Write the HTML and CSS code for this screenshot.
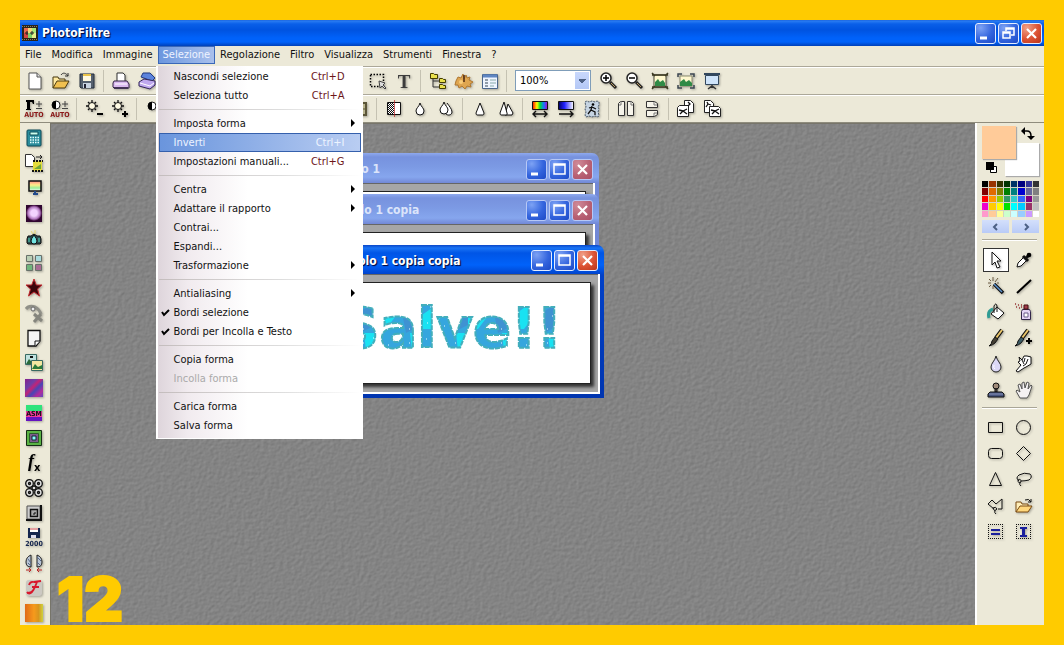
FILE: index.html
```html
<!DOCTYPE html>
<html lang="it">
<head>
<meta charset="utf-8">
<title>PhotoFiltre</title>
<link rel="stylesheet" href="styles.css">
</head>
<body>
<div class="app">
  <header class="titlebar">
    <svg class="logo" viewBox="0 0 16 16" aria-hidden="true"><rect width="16" height="16" fill="#2b2418"/><path d="M0 1.500h16M0 14.500h16" stroke="#8a8062" stroke-dasharray="1 1"/><path fill="#e8694e" d="M2 3h4v5H2z"/><path fill="#f4d77c" d="M6 3h4v5H6z"/><path fill="#a9e77a" d="M10 3h4v5h-4z"/><path fill="#d4443e" d="M2 8h4v5H2z"/><path fill="#7fd06a" d="M6 8h4v5H6z"/><path fill="#e6f08a" d="M10 8h4v5h-4z"/><path d="M3 8h3M8 8h4M5 6v4M10 6v4" stroke="#222"/></svg>
    <h1>PhotoFiltre</h1>
    <div class="winbtns">
      <button class="wb" aria-label="Riduci"><svg viewBox="0 0 21 21"><path d="M5 15h7" stroke="#fff" stroke-width="3"/></svg></button>
      <button class="wb" aria-label="Ripristina"><svg viewBox="0 0 21 21"><path d="M8 8V5h8v7h-3M8 6h8" fill="none" stroke="#fff" stroke-width="1.500"/><path d="M5 9h7v6H5zM5 10h7" fill="none" stroke="#fff" stroke-width="1.500"/></svg></button>
      <button class="wb close" aria-label="Chiudi"><svg viewBox="0 0 21 21"><path d="M6 6l9 9M15 6l-9 9" stroke="#fff" stroke-width="2.200"/></svg></button>
    </div>
  </header>

  <nav class="menubar">
    <button>File</button><button>Modifica</button><button>Immagine</button>
    <div class="open-item">
      <button class="active">Selezione</button>
      <div class="menu" role="menu">
        <button role="menuitem"><span>Nascondi selezione</span><kbd>Ctrl+D</kbd></button>
        <button role="menuitem"><span>Seleziona tutto</span><kbd>Ctrl+A</kbd></button>
        <hr>
        <button role="menuitem" class="sub"><span>Imposta forma</span></button>
        <button role="menuitem" class="hot"><span>Inverti</span><kbd>Ctrl+I</kbd></button>
        <button role="menuitem"><span>Impostazioni manuali...</span><kbd>Ctrl+G</kbd></button>
        <hr>
        <button role="menuitem" class="sub"><span>Centra</span></button>
        <button role="menuitem" class="sub"><span>Adattare il rapporto</span></button>
        <button role="menuitem"><span>Contrai...</span></button>
        <button role="menuitem"><span>Espandi...</span></button>
        <button role="menuitem" class="sub"><span>Trasformazione</span></button>
        <hr>
        <button role="menuitem" class="sub"><span>Antialiasing</span></button>
        <button role="menuitemcheckbox" aria-checked="true"><svg class="tick" viewBox="0 0 9 9"><path d="M1 4l2 3 5-5" fill="none" stroke="#000" stroke-width="2"/></svg><span>Bordi selezione</span></button>
        <button role="menuitemcheckbox" aria-checked="true"><svg class="tick" viewBox="0 0 9 9"><path d="M1 4l2 3 5-5" fill="none" stroke="#000" stroke-width="2"/></svg><span>Bordi per Incolla e Testo</span></button>
        <hr>
        <button role="menuitem"><span>Copia forma</span></button>
        <button role="menuitem" disabled><span>Incolla forma</span></button>
        <hr>
        <button role="menuitem"><span>Carica forma</span></button>
        <button role="menuitem"><span>Salva forma</span></button>
      </div>
    </div>
    <button>Regolazione</button><button>Filtro</button><button>Visualizza</button><button>Strumenti</button><button>Finestra</button><button>?</button>
  </nav>

  <div class="toolbar first">
    <button aria-label="Nuovo"><svg viewBox="0 0 20 20"><path d="M4 2h8l4 4v12H4z" fill="#fff" stroke="#555"/><path d="M12 2v4h4" fill="#ddd" stroke="#555"/></svg></button>
    <button aria-label="Apri"><svg viewBox="0 0 20 20"><path d="M2 17V6h5l1 2h6v3" fill="#ffe9a0" stroke="#4a3a10"/><path d="M2 17l4-7h12l-4 7z" fill="#f0c050" stroke="#4a3a10"/><path d="M10 4c2-3 5-2 7 1M17 2v3h-3" fill="none" stroke="#333"/></svg></button>
    <button aria-label="Salva"><svg viewBox="0 0 20 20"><path d="M3 3h14v14H4l-1-1z" fill="#55606e" stroke="#222c3c"/><path d="M6 3h8v7H6z" fill="#fff9e0"/><path d="M6 4h8" stroke="#eac348" stroke-width="2"/><path d="M6 12h8v5H6z" fill="#c9d4e2"/><path d="M7 13h2v4H7z" fill="#223"/></svg></button>
    <i class="sep"></i>
    <button aria-label="Stampa"><svg viewBox="0 0 20 20"><path d="M6 10V2h6l2 2v6" fill="#fff" stroke="#333"/><path d="M3 10h13l2 3v4H3l-1-1v-4z" fill="#d9b8ee" stroke="#332244"/><path d="M4 13h12" stroke="#fff"/><path d="M3 17h14" stroke="#433355" stroke-width="2"/></svg></button>
    <button aria-label="Acquisisci"><svg viewBox="0 0 20 20"><path d="M6 2l7 0 5 5-3 3L4 6z" fill="#5c83dc" stroke="#223a80"/><path d="M2 11l5-3 11 2v4l-5 4-11-3z" fill="#bfa8ee" stroke="#33265a"/><path d="M3 12l10 3 4-3" fill="none" stroke="#fff"/></svg></button>
    <i class="under-a"></i>
    <button aria-label="Selezione"><svg viewBox="0 0 20 20"><path d="M2.500 3.500h13v12h-13z" fill="none" stroke="#000" stroke-width="1.500" stroke-dasharray="1.500 1.500"/><path d="M11 10l6 2-2 2 3 3-1 1-3-3-2 2z" fill="#ddd" stroke="#444"/></svg></button>
    <button aria-label="Testo"><svg viewBox="0 0 20 20"><text x="10" y="17" class="glyph-t">T</text></svg></button>
    <i class="sep"></i>
    <button aria-label="Esplora"><svg viewBox="0 0 20 20"><path d="M5 7v9h6M5 10h6" fill="none" stroke="#333"/><path d="M2.500 2.500h3l1 1h3v4h-7zM11.500 7.500h3l1 1h2v3h-6zM11.500 13.500h3l1 1h2v3h-6z" fill="#e9e04c" stroke="#443c00"/></svg></button>
    <button aria-label="Automatismi"><svg viewBox="0 0 20 20"><path d="M2 10l2-4 3 1 2-4 1 5 2-4 1 3 3-1-1 3 4 2-3 2 1 3-4-1-2 3-3-3-3 2-1-3-3 0z" fill="#dfa650" stroke="#b07830"/><path d="M10 4v7" stroke="#4e2910" stroke-width="1.500"/><circle cx="7" cy="11" r="2" fill="#f8cd7a"/></svg></button>
    <button aria-label="Preferenze"><svg viewBox="0 0 20 20"><path d="M2.500 3.500h15v14h-15z" fill="#eef4ff" stroke="#4b668c"/><path d="M3 5h14" stroke="#5f86c2" stroke-width="3"/><path d="M5 9h3M5 12h3M5 15h3" stroke="#345"/><path d="M10 9h6M10 12h6M10 15h4" stroke="#8aa"/></svg></button>
    <i class="sep"></i>
    <select aria-label="Zoom"><option>100%</option></select>
    <button aria-label="Ingrandisci"><svg viewBox="0 0 20 20"><circle cx="8" cy="7" r="5" fill="#fff" stroke="#222" stroke-width="1.500"/><path d="M5 7h6M8 4v6" stroke="#000" stroke-width="1.500"/><path d="M12 11l6 6" stroke="#222" stroke-width="3"/><path d="M13 12l4 4" stroke="#b99b62"/></svg></button>
    <button aria-label="Riduci zoom"><svg viewBox="0 0 20 20"><circle cx="8" cy="7" r="5" fill="#fff" stroke="#222" stroke-width="1.500"/><path d="M5 7h6" stroke="#000" stroke-width="1.500"/><path d="M12 11l6 6" stroke="#222" stroke-width="3"/><path d="M13 12l4 4" stroke="#b99b62"/></svg></button>
    <button aria-label="Dimensioni reali"><svg viewBox="0 0 20 20"><path d="M4 4h12v12H4z" fill="#fff8cf" stroke="#4b4b38"/><path d="M5 15v-4l3-3 2 3 3-2 2 3v3z" fill="#2f8a46"/><path d="M2 2l3 3M18 2l-3 3M2 18l3-3M18 18l-3-3M2 4h16M2 16h16" stroke="#3c3a22" stroke-width="1.500"/></svg></button>
    <button aria-label="Adatta"><svg viewBox="0 0 20 20"><path d="M4 5h12v10H4z" fill="#fff8cf" stroke="#8b8b70"/><path d="M4 15v-4l4-3 2 3 3-2 3 3v3z" fill="#2f8a46"/><path d="M2 6V3h4M14 3h4v3M2 14v3h4M14 17h4v-3" fill="none" stroke="#3b4650" stroke-width="1.500"/></svg></button>
    <button aria-label="Schermo intero"><svg viewBox="0 0 20 20"><path d="M2 3h16" stroke="#33485e" stroke-width="2"/><path d="M3.500 4.500h13v9h-13z" fill="#cfe4fa" stroke="#33485e"/><path d="M10 14v3M6 18l4-3 4 3" fill="none" stroke="#333" stroke-width="1.500"/></svg></button>
  </div>

  <div class="toolbar second">
    <button aria-label="Gamma automatico"><svg viewBox="0 0 20 20"><path d="M2 1h8v4H9L8 3H6v7h1v1H2v-1h1V3H2z"/><path d="M12 5h6M15 2v6M12 9.500h6" stroke="#444"/><text x="10" y="18" class="auto">AUTO</text></svg></button>
    <button aria-label="Contrasto automatico"><svg viewBox="0 0 20 20"><circle cx="6" cy="6" r="4" fill="#fff" stroke="#222"/><path d="M6 2a4 4 0 0 0 0 8z"/><path d="M12 5h6M15 2v6M12 9.500h6" stroke="#444"/><text x="10" y="18" class="auto">AUTO</text></svg></button>
    <i class="sep"></i>
    <button aria-label="Meno luminosità"><svg viewBox="0 0 20 20"><path d="M8 1v12M2 7h12M4 3l8 8M12 3l-8 8" stroke="#111" stroke-width="1.300"/><circle cx="8" cy="7" r="3.500" fill="#fffbe4" stroke="#111"/><path d="M13 15h6" stroke="#000" stroke-width="2"/></svg></button>
    <button aria-label="Più luminosità"><svg viewBox="0 0 20 20"><path d="M8 1v12M2 7h12M4 3l8 8M12 3l-8 8" stroke="#111" stroke-width="1.300"/><circle cx="8" cy="7" r="3.500" fill="#fffbe4" stroke="#111"/><path d="M12 15h6M15 12v6" stroke="#000" stroke-width="2"/></svg></button>
    <i class="sep"></i>
    <button aria-label="Meno contrasto"><svg viewBox="0 0 20 20"><circle cx="8" cy="7" r="4" fill="#fff" stroke="#222"/><path d="M8 3a4 4 0 0 0 0 8z"/></svg></button>
    <i class="under-b"></i>
    <button aria-label="Griglia"><svg viewBox="0 0 20 20"><path d="M4 4h12v12H4z" fill="#b9b48e" stroke="#5b5638" stroke-width="2"/><path d="M4 10h12M10 4v12" stroke="#5b5638"/></svg></button>
    <i class="sep"></i>
    <button aria-label="Antialias"><svg viewBox="0 0 20 20"><path d="M3.500 3.500h13v12h-13z" fill="#fff" stroke="#111"/><path d="M4 4.500h6M4 6.500h6M4 8.500h6M4 10.500h6M4 12.500h6M4 14.500h6" stroke="#111" stroke-dasharray="1 1"/><path d="M5 5.500h5M5 7.500h5M5 9.500h5M5 11.500h5M5 13.500h5" stroke="#111" stroke-dasharray="1 1"/><path d="M10.500 1v17" stroke="#b22" stroke-opacity=".7"/></svg></button>
    <button aria-label="Sfoca"><svg viewBox="0 0 20 20"><path d="M10 4c1 4 4 5 4 8a4 4 0 0 1-8 0c0-3 3-4 4-8z" fill="#fff" stroke="#111"/></svg></button>
    <button aria-label="Sfoca di più"><svg viewBox="0 0 20 20"><path d="M11 4c2 3 5 6 5 9 0 3-4 4-6 2" fill="#fff" stroke="#111"/><path d="M8 3c1 4 4 5 4 8a4 4 0 0 1-8 0c0-3 3-4 4-8z" fill="#fff" stroke="#111"/></svg></button>
    <i class="sep"></i>
    <button aria-label="Nitidezza"><svg viewBox="0 0 20 20"><path d="M10 4L6 14q0 2 1 2h6q1 0 1-2z" fill="#fff" stroke="#111"/></svg></button>
    <button aria-label="Più nitidezza"><svg viewBox="0 0 20 20"><path d="M12 5l-3 11h7l1-2z" fill="#fff" stroke="#111"/><path d="M8 3L4 14q0 2 1 2h5q2 0 1-2z" fill="#fff" stroke="#111"/></svg></button>
    <i class="sep"></i>
    <button aria-label="Spettro"><svg viewBox="0 0 20 20"><defs><linearGradient id="rb"><stop offset="0" stop-color="red"/><stop offset=".3" stop-color="#ff0"/><stop offset=".5" stop-color="#0d3"/><stop offset=".75" stop-color="#17f"/><stop offset="1" stop-color="#b0c"/></linearGradient><linearGradient id="bl"><stop offset="0" stop-color="#000060"/><stop offset=".4" stop-color="#22f"/><stop offset="1" stop-color="#fff"/></linearGradient></defs><path d="M2.500 2.500h15v8h-15z" fill="url(#rb)" stroke="#111"/><path d="M3 15h14M6 12l-3 3 3 3M14 12l3 3-3 3" fill="none" stroke="#111" stroke-width="1.400"/></svg></button>
    <button aria-label="Sfumatura"><svg viewBox="0 0 20 20"><path d="M2.500 2.500h15v8h-15z" fill="url(#bl)" stroke="#111"/><path d="M3 15h14M14 12l3 3-3 3" fill="none" stroke="#111" stroke-width="1.400"/></svg></button>
    <button aria-label="PhotoMasque"><svg viewBox="0 0 20 20"><path d="M3 3l2-1 2 1 3-1 3 1 2-1 2 1 0 3-1 2 1 2-1 3 1 3-1 2-3-1-3 1-3-1-3 1-1-2 1-3-1-3 1-2z" fill="#c6d4e2" stroke="#48586a" stroke-dasharray="2 1"/><circle cx="11" cy="5.500" r="1.300"/><path d="M10 7l-1 4-3 4M9 11l4 2v3M7 9l3-1 4 2" fill="none" stroke="#111" stroke-width="1.300"/></svg></button>
    <i class="sep"></i>
    <button aria-label="Specchio orizzontale"><svg viewBox="0 0 20 20"><path d="M2.500 4.500l2-2h4v14h-6zM17.500 4.500l-2-2h-4v14h6z" fill="#f6f4ea" stroke="#333"/><path d="M5 2v4H3M15 2v4h2" fill="none" stroke="#777"/></svg></button>
    <button aria-label="Specchio verticale"><svg viewBox="0 0 20 20"><path d="M4.500 2.500h8l3 2v4h-11zM4.500 17.500h8l3-2v-4h-11z" fill="#f6f4ea" stroke="#333"/><path d="M12 3v3h3M12 17v-3h3" fill="none" stroke="#777"/></svg></button>
    <i class="sep"></i>
    <button aria-label="Ruota a sinistra"><svg viewBox="0 0 20 20"><path d="M8.500 1.500h6l3 3v9h-9z" fill="#fff" stroke="#222"/><path d="M1.500 8.500l2-2h9v11h-11z" fill="#fff" stroke="#222"/><path d="M3 11l4 1 4-2M7 12l-3 3M7 12l4 3M12 3l2 2-2 2" fill="none" stroke="#111" stroke-width="1.300"/></svg></button>
    <button aria-label="Ruota a destra"><svg viewBox="0 0 20 20"><path d="M2.500 1.500h6l3 3v9h-9z" fill="#fff" stroke="#222"/><path d="M7.500 7.500h9l2 2v8h-11z" fill="#fff" stroke="#222"/><path d="M9 11l4 1 4-2M13 12l-3 3M13 12l4 3M5 3l1 2-2 3M6 5l3 1" fill="none" stroke="#111" stroke-width="1.300"/></svg></button>
  </div>

  <main class="work">
    <aside class="plugins">
      <button aria-label="Calcolatrice"><svg viewBox="0 0 20 20"><rect x="3" y="2" width="14" height="16" rx="1" fill="#2b8d9c" stroke="#0c4a58"/><path d="M6 4h8v3H6z" fill="#cfe" stroke="#0c4a58"/><path d="M6 9.500h9M6 12h9M6 14.500h9" stroke="#e6ffff" stroke-width="1.500" stroke-dasharray="1.500 1"/></svg></button>
      <button aria-label="Esporta"><svg viewBox="0 0 20 20"><path d="M1.500 1.500h6l3 3v9h-9z" fill="#fff" stroke="#333"/><path d="M12 4h6M16 2l2 2-2 2" fill="none" stroke="#222"/><path d="M9 8h9v10H9z" fill="#e4dc3c"/><path d="M9 8h10M8 18h11" stroke="#111" stroke-width="2" stroke-dasharray="2 1"/><path d="M10 16l7-5v5z" fill="#71a83a"/></svg></button>
      <button aria-label="Schermo"><svg viewBox="0 0 20 20"><defs><linearGradient id="sc" x2="0" y2="1"><stop offset="0" stop-color="#f88"/><stop offset=".4" stop-color="#fe8"/><stop offset=".7" stop-color="#9e9"/><stop offset="1" stop-color="#fff"/></linearGradient></defs><path d="M5 3h12v10H5z" fill="url(#sc)" stroke="#111" stroke-width="1.500"/><path d="M11 13v3M9 16h5" stroke="#234b8c" stroke-width="2"/></svg></button>
      <button aria-label="Sfera"><svg viewBox="0 0 20 20"><defs><radialGradient id="or"><stop offset=".4" stop-color="#f3d3ff"/><stop offset=".75" stop-color="#b47ac2"/><stop offset="1" stop-color="#3a0838"/></radialGradient></defs><path d="M2 2h16v17H2z" fill="#300630"/><circle cx="10" cy="10" r="8" fill="url(#or)"/></svg></button>
      <button aria-label="Fotocamera"><svg viewBox="0 0 20 20"><path d="M4 8h3l3-2 3 2h3l1 3v4l-1 1H4l-1-1v-4z" fill="#2c4a4e" stroke="#111"/><path d="M10 7q3 4 3 6a3 3 0 0 1-6 0q0-2 3-6z" fill="#72e3e0" stroke="#111"/><path d="M5 10v4M15 10v4" stroke="#4a9" stroke-width="1.500"/><path d="M7 3l2 3M11 2v4" stroke="#e8d870"/></svg></button>
      <button aria-label="Mosaico"><svg viewBox="0 0 20 20"><g stroke="#68716a"><path d="M2.500 2.500h6v6h-6z" fill="#b9ceb4"/><path d="M11.500 2.500h6v6h-6z" fill="#a9dadc"/><path d="M2.500 11.500h6v6h-6z" fill="#6fb47c"/><path d="M11.500 11.500h6v6h-6z" fill="#a86c94"/></g></svg></button>
      <button aria-label="Stella"><svg viewBox="0 0 20 20"><path d="M10 1l2.300 6H18l-4.500 4 2 7L10 14l-5.500 4 2-7L2 7h5.700z" fill="#3b060a" stroke="#c32a30"/></svg></button>
      <button aria-label="Seppia"><svg viewBox="0 0 20 20"><path d="M2 6q3-4 9-2 4 2 6 7" fill="none" stroke="#909088" stroke-width="3"/><circle cx="9" cy="6" r="2" fill="#eee" stroke="#666"/><path d="M10 11l8 7M17 11l-7 8" stroke="#85857d" stroke-width="3"/></svg></button>
      <button aria-label="Pagina"><svg viewBox="0 0 20 20"><path d="M4 2.500h12V13l-4 5H4z" fill="#f5f5f5" stroke="#111" stroke-width="1.300"/><path d="M11 18v-5h5" fill="#fff" stroke="#111"/></svg></button>
      <button aria-label="Immagini"><svg viewBox="0 0 20 20"><path d="M1.500 1.500h11v10h-11z" fill="#bfe1df" stroke="#386a62"/><path d="M2 11l3-5 3 3 4-2v4z" fill="#2b6b3a"/><path d="M7.500 7.500h11v10h-11z" fill="#f3e7a0" stroke="#386a62"/><path d="M8 16l3-5 3 3 4-2v4z" fill="#2b7b3a"/><path d="M6 4h3" stroke="#111" stroke-width="2"/></svg></button>
      <button aria-label="Diagonale"><svg viewBox="0 0 20 20"><defs><linearGradient id="dg" x2="1" y2="1"><stop offset="0" stop-color="#87208d"/><stop offset=".3" stop-color="#6c3fa8"/><stop offset=".45" stop-color="#c12377"/><stop offset=".6" stop-color="#4746b5"/><stop offset=".8" stop-color="#b22a9c"/><stop offset="1" stop-color="#604ac0"/></linearGradient></defs><path d="M1 1h18v18H1z" fill="url(#dg)"/></svg></button>
      <button aria-label="ASM"><svg viewBox="0 0 20 20"><path d="M2 2h16v6H2z" fill="#2fe37c"/><path d="M2 8h16v6H2z" fill="#f0389d"/><path d="M2 14h16v4H2z" fill="#6514c0"/><text x="10" y="13" class="asm">ASM</text></svg></button>
      <button aria-label="Cornice verde"><svg viewBox="0 0 20 20"><path d="M2.500 2.500h15v15h-15z" fill="#5ab345" stroke="#152d15"/><path d="M5.500 5.500h9v9h-9z" fill="#7c5c8c" stroke="#2c5c2c"/><path d="M8 8h4v4H8z" fill="#8ff" stroke="#123"/></svg></button>
      <button aria-label="Funzione"><svg viewBox="0 0 20 20"><text x="4" y="14" class="fx-f">f</text><text x="10" y="18" class="fx-x">x</text></svg></button>
      <button aria-label="Cerchi"><svg viewBox="0 0 20 20"><g fill="#ddd" stroke="#111" stroke-width="1.300"><circle cx="5.500" cy="5.500" r="3.800"/><circle cx="14.500" cy="5.500" r="3.800"/><circle cx="5.500" cy="14.500" r="3.800"/><circle cx="14.500" cy="14.500" r="3.800"/><circle cx="10" cy="10" r="2"/><circle cx="5.500" cy="5.500" r="1"/><circle cx="14.500" cy="5.500" r="1"/><circle cx="5.500" cy="14.500" r="1"/><circle cx="14.500" cy="14.500" r="1"/></g></svg></button>
      <button aria-label="Rilievo"><svg viewBox="0 0 20 20"><path d="M3 3h13v13H3z" fill="#ccc" stroke="#555"/><path d="M2 17h15V2" fill="none" stroke="#111" stroke-width="2"/><path d="M6.500 6.500h7v7h-7z" fill="#aaa" stroke="#111" stroke-width="1.500"/><path d="M9 11h2V9" fill="none" stroke="#111"/></svg></button>
      <button aria-label="Salva 2000"><svg viewBox="0 0 20 20"><path d="M4 0h12v10H4z" fill="#15264e"/><path d="M6 0h8v4H6z" fill="#fff"/><path d="M6 1h8" stroke="#c44"/><path d="M7 7h5v3H7z" fill="#dde"/><text x="10" y="18" class="y2k">2000</text></svg></button>
      <button aria-label="Simmetria"><svg viewBox="0 0 20 20"><path d="M7 2Q2 4 2 9t5 5zM13 2q5 2 5 7t-5 5z" fill="#b8c4d4" stroke="#222"/><path d="M4 6l3 4M4 10l3 3M13 4l4 4M13 9l3 3" stroke="#56688a"/><path d="M2 17h5M5 15l2 2-2 2M18 17h-5M15 15l-2 2 2 2" fill="none" stroke="#b22"/></svg></button>
      <button aria-label="Filtro F"><svg viewBox="0 0 20 20"><rect x="2" y="2" width="16" height="16" rx="3" fill="#ccc9c2"/><path d="M5 7q1-4 5-3l7-1M13 4q-2 6-5 10-3 3-5 0M8 9h7M3 15q5 0 7-4" fill="none" stroke="#d8182c" stroke-width="1.800"/></svg></button>
      <button aria-label="Gradiente"><svg viewBox="0 0 20 20"><defs><linearGradient id="og"><stop offset="0" stop-color="#e06a18"/><stop offset=".5" stop-color="#f69a1c"/><stop offset=".75" stop-color="#d8951e"/><stop offset="1" stop-color="#cdd23e"/></linearGradient></defs><path d="M1 1h18v18H1z" fill="url(#og)"/></svg></button>
    </aside>

    <section class="canvas">
      <svg class="texture" aria-hidden="true"><filter id="paper" x="0" y="0" width="100%" height="100%" color-interpolation-filters="sRGB"><feTurbulence type="fractalNoise" baseFrequency=".26 .3" numOctaves="3" seed="4"/><feDiffuseLighting surfaceScale=".2" diffuseConstant=".73" lighting-color="#fff"><feDistantLight azimuth="225" elevation="45"/></feDiffuseLighting></filter><rect width="100%" height="100%" filter="url(#paper)"/></svg>

      <article class="window w1">
        <div class="wtitle"><h2>Senza titolo 1</h2><div class="winbtns">
          <button class="wb" aria-label="Riduci"><svg viewBox="0 0 21 21"><path d="M5 15h7" stroke="#fff" stroke-width="3"/></svg></button>
          <button class="wb" aria-label="Ingrandisci"><svg viewBox="0 0 21 21"><path d="M5 5h11v10H5zM5 6h11" fill="none" stroke="#fff" stroke-width="1.500"/></svg></button>
          <button class="wb close" aria-label="Chiudi"><svg viewBox="0 0 21 21"><path d="M6 6l9 9M15 6l-9 9" stroke="#fff" stroke-width="2.200"/></svg></button></div></div>
        <div class="wbody"><div class="sheet"></div></div>
      </article>
      <article class="window w2">
        <div class="wtitle"><h2>Senza titolo 1 copia</h2><div class="winbtns">
          <button class="wb" aria-label="Riduci"><svg viewBox="0 0 21 21"><path d="M5 15h7" stroke="#fff" stroke-width="3"/></svg></button>
          <button class="wb" aria-label="Ingrandisci"><svg viewBox="0 0 21 21"><path d="M5 5h11v10H5zM5 6h11" fill="none" stroke="#fff" stroke-width="1.500"/></svg></button>
          <button class="wb close" aria-label="Chiudi"><svg viewBox="0 0 21 21"><path d="M6 6l9 9M15 6l-9 9" stroke="#fff" stroke-width="2.200"/></svg></button></div></div>
        <div class="wbody"><div class="sheet"></div></div>
      </article>
      <article class="window w3">
        <div class="wtitle"><h2>Senza titolo 1 copia copia</h2><div class="winbtns">
          <button class="wb" aria-label="Riduci"><svg viewBox="0 0 21 21"><path d="M5 15h7" stroke="#fff" stroke-width="3"/></svg></button>
          <button class="wb" aria-label="Ingrandisci"><svg viewBox="0 0 21 21"><path d="M5 5h11v10H5zM5 6h11" fill="none" stroke="#fff" stroke-width="1.500"/></svg></button>
          <button class="wb close" aria-label="Chiudi"><svg viewBox="0 0 21 21"><path d="M6 6l9 9M15 6l-9 9" stroke="#fff" stroke-width="2.200"/></svg></button></div></div>
        <div class="wbody"><div class="sheet">
          <svg class="salve" viewBox="0 0 260 100"><defs><pattern id="ice" width="46" height="50" patternUnits="userSpaceOnUse"><path d="M0 0h46v50H0z" fill="#35a6de"/><path d="M0 32l14-10 8 8-12 16H0zM34 0h12v12L36 18z" fill="#19e2f2"/><path d="M26 30l20-10v22l-16 8z" fill="#3f92d2"/><path d="M4 6h1M12 12h1M22 5h1M33 10h1M40 18h1M8 24h1M17 31h1M28 26h1M38 33h1M5 40h1M22 43h1M33 46h1M43 5h1M14 20h1" stroke="#e8ffff"/></pattern></defs>
          <text x="232" y="64" text-anchor="end">Salve!!</text></svg>
        </div></div>
      </article>
      <div class="step">12</div>
    </section>

    <aside class="tools">
      <div class="colors">
        <button class="bg" aria-label="Colore di sfondo"></button>
        <button class="fg" aria-label="Colore di primo piano"></button>
        <svg class="swap" viewBox="0 0 14 14" aria-hidden="true"><path d="M3 4h3q4 0 4 5" fill="none" stroke="#000" stroke-width="1.500"/><path d="M0 4l4-4v8zM6 9h8l-4 4z"/></svg>
        <svg class="reset" viewBox="0 0 12 12" aria-hidden="true"><path d="M4.500 4.500h6v6h-6z" fill="#fff" stroke="#000"/><path d="M0 0h8v8H0z"/></svg>
      </div>
      <div class="palette">
        <i style="background:#000"></i><i style="background:#993300"></i><i style="background:#333300"></i><i style="background:#003300"></i><i style="background:#003366"></i><i style="background:#000080"></i><i style="background:#333399"></i><i style="background:#333"></i>
        <i style="background:#800000"></i><i style="background:#e06a00"></i><i style="background:#808000"></i><i style="background:#008000"></i><i style="background:#008080"></i><i style="background:#0000d0"></i><i style="background:#666699"></i><i style="background:#808080"></i>
        <i style="background:#f00"></i><i style="background:#ff9900"></i><i style="background:#99cc00"></i><i style="background:#339966"></i><i style="background:#33cccc"></i><i style="background:#3366ff"></i><i style="background:#800080"></i><i style="background:#999"></i>
        <i style="background:#e0c"></i><i style="background:#ffcc00"></i><i style="background:#ff0"></i><i style="background:#00e000"></i><i style="background:#0ff"></i><i style="background:#00ccff"></i><i style="background:#993366"></i><i style="background:#c0c0c0"></i>
        <i style="background:#ff99cc"></i><i style="background:#ffcc99"></i><i style="background:#ffff99"></i><i style="background:#ccffcc"></i><i style="background:#ccffff"></i><i style="background:#99ccff"></i><i style="background:#cc99ff"></i><i style="background:#fff"></i>
      </div>
      <div class="pager">
        <button aria-label="Precedente"><svg viewBox="0 0 8 8"><path d="M5 1L2 4l3 3" fill="none" stroke="#4d6185" stroke-width="2"/></svg></button>
        <button aria-label="Successivo"><svg viewBox="0 0 8 8"><path d="M3 1l3 3-3 3" fill="none" stroke="#4d6185" stroke-width="2"/></svg></button>
      </div>
      <hr>
      <div class="grid">
        <button class="on" aria-label="Seleziona"><svg viewBox="0 0 20 20"><path d="M6 2v13l3-3 2 6 3-1-3-6h4z" fill="#fff" stroke="#111"/></svg></button>
        <button aria-label="Contagocce"><svg viewBox="0 0 20 20"><path d="M3 17l1-4 6-6 3 3-6 6z" fill="#fff" stroke="#111"/><path d="M9 6l5 5M12 8l3-3" stroke="#111" stroke-width="3"/><circle cx="15" cy="5" r="2.300"/></svg></button>
        <button aria-label="Bacchetta magica"><svg viewBox="0 0 20 20"><path d="M8 8l9 9" stroke="#111" stroke-width="3.500"/><path d="M8 8l8 8" stroke="#5c93cf" stroke-width="1.500"/><path d="M7 1v4M7 10v3M2 7h3M9 6l3-4M3 3l2 2M3 11l2-2M11 7h2" stroke="#6a5b42"/></svg></button>
        <button aria-label="Linea"><svg viewBox="0 0 20 20"><path d="M3 17L17 4" stroke="#000" stroke-width="2"/></svg></button>
        <button aria-label="Riempimento"><svg viewBox="0 0 20 20"><path d="M3 16q-2-7 4-9" fill="none" stroke="#2f9c94" stroke-width="3"/><path d="M11 5l7 6-6 6-7-5z" fill="#fff" stroke="#111"/><path d="M8 11V4q2-4 3 0v6" fill="none" stroke="#111"/></svg></button>
        <button aria-label="Spray"><svg viewBox="0 0 20 20"><path d="M8.500 7.500h7l1 2v8h-9v-8z" fill="#e3d3f4" stroke="#33264a"/><path d="M10 3h4v4h-4z" fill="#a33b4c" stroke="#411"/><path d="M10 11h4v4h-4z" fill="#fff" stroke="#6a5a8a"/><path d="M1 2h1M4 3h1M7 3h1M2 5h1M5 6h1M7 5h1" stroke="#933" stroke-width="1.500"/></svg></button>
        <button aria-label="Pennello"><svg viewBox="0 0 20 20"><path d="M16 2l-6 8" stroke="#111" stroke-width="4"/><path d="M16 2l-6 8" stroke="#e9c56a" stroke-width="2"/><path d="M9 9l3 2-3 4q-2 2-6 3 3-2 3-5z" fill="#454034" stroke="#111"/></svg></button>
        <button aria-label="Pennello avanzato"><svg viewBox="0 0 20 20"><path d="M14 2L8 10" stroke="#111" stroke-width="4"/><path d="M14 2L8 10" stroke="#e9c56a" stroke-width="2"/><path d="M7 9l3 2-3 4q-2 2-6 3 3-2 3-5z" fill="#3c5c66" stroke="#111"/><path d="M12 13h6M15 10v6" stroke="#000" stroke-width="2"/></svg></button>
        <button aria-label="Sfocatura"><svg viewBox="0 0 20 20"><path d="M10 2c1 5 5 7 5 11a5 5 0 0 1-10 0c0-4 4-6 5-11z" fill="#dcd8f6" stroke="#222"/><path d="M8 11q-1 3 1 4" stroke="#fff" fill="none"/></svg></button>
        <button aria-label="Sfumino"><svg viewBox="0 0 20 20"><path d="M5 3l3 3 2-4h3l4 1v7l-5 3-2 1-6 4-2-1 5-6-3-3 2-1z" fill="#fff" stroke="#111"/><path d="M8 6l2 4M11 4l-1 4M14 5l-2 5M9 12l3-2" stroke="#111"/></svg></button>
        <button aria-label="Timbro"><svg viewBox="0 0 20 20"><circle cx="10" cy="6" r="3" fill="#a08b7a" stroke="#111"/><path d="M9 9h2v3H9z" fill="#6e5c50" stroke="#111"/><path d="M4 12h12l2 2v3H2v-3z" fill="#48557e" stroke="#111"/><path d="M3 14h14" stroke="#8792b8"/></svg></button>
        <button aria-label="Mano"><svg viewBox="0 0 20 20"><path d="M6 18l-4-7 1-1 3 2-2-7 2-1 2 5V3l2-1 1 6 2-6 2 1-1 6 3-4 1 1-3 9-2 3z" fill="#f4f1f2" stroke="#555"/></svg></button>
      </div>
      <hr class="tight">
      <div class="grid shapes">
        <button aria-label="Rettangolo"><svg viewBox="0 0 20 20"><path d="M2.500 4.500h14v10h-14z"/></svg></button>
        <button aria-label="Ellisse"><svg viewBox="0 0 20 20"><circle cx="9.500" cy="9.500" r="7"/></svg></button>
        <button aria-label="Rettangolo arrotondato"><svg viewBox="0 0 20 20"><rect x="2.500" y="4.500" width="14" height="10" rx="3"/></svg></button>
        <button aria-label="Rombo"><svg viewBox="0 0 20 20"><path d="M9.500 2.500l7 7-7 7-7-7z"/></svg></button>
        <button aria-label="Triangolo"><svg viewBox="0 0 20 20"><path d="M9.500 2.500l6 13h-12z"/></svg></button>
        <button aria-label="Lazo"><svg viewBox="0 0 20 20"><path d="M5 11Q1 8 5 5q5-3 11-1 3 3-1 6-4 1-8 1"/><path d="M4 10q3-2 3 2-3 2-3-2zM6 12q-1 3 1 4"/></svg></button>
        <button aria-label="Poligono"><svg viewBox="0 0 20 20"><path d="M8 13L2 8l4-4 4 4 6-5v10h-4"/><path d="M7 12q3-2 4 1-3 3-4-1zM9 14q-1 3 1 4"/></svg></button>
        <button aria-label="Carica forma"><svg viewBox="0 0 20 20"><path class="flap" d="M2 16V6h5l1 2h6v3"/><path class="folder" d="M2 16l4-6h12l-4 6z"/><path d="M11 4q4-2 6 2M17 3v3h-3"/></svg></button>
        <button aria-label="Stile contorno"><svg viewBox="0 0 20 20"><path d="M2 2.500h15M2 16.500h15M2.500 2v15M16.500 2v15" stroke-dasharray="1 1"/><path class="ink" d="M5 8h9M5 12h9"/></svg></button>
        <button aria-label="Cursore testo"><svg viewBox="0 0 20 20"><path d="M2 2.500h15M2 16.500h15M2.500 2v15M16.500 2v15" stroke-dasharray="1 1"/><path class="ink" d="M6 6h7M6 14h7M9 6v8M10 6v8"/></svg></button>
      </div>
    </aside>
  </main>
</div>
</body>
</html>
```

FILE: styles.css
```css
* { box-sizing: border-box; }
body {
  margin: 0;
  min-height: 100vh;
  padding: 20px;
  display: flex;
  background: #ffcb00;
  font: 11px/14px "DejaVu Sans Condensed", "Noto Sans", sans-serif;
  color: #111;
}
button { border: 0; padding: 0; margin: 0; background: none; font: inherit; color: inherit; display: flex; align-items: center; }
h1, h2 { margin: 0; font: bold 12px/16px "DejaVu Sans Condensed", "Open Sans", sans-serif; color: #fff; white-space: nowrap; }
svg { display: block; flex: none; }

.app { flex: 1; min-width: 0; display: flex; flex-direction: column; background: #ece9d8; }

.titlebar {
  height: 26px;
  padding: 0 2px;
  display: flex;
  align-items: center;
  gap: 4px;
  background: linear-gradient(#1a5fd8 0, #2a7cf2 1px, #0a5fe8 4px, #0053e0 10px, #0062fa 18px, #0062fa 22px, #0040b8 26px);
}
.titlebar h1 { text-shadow: 1px 1px 1px #003; }
.logo { width: 16px; height: 16px; }

.winbtns { margin-left: auto; display: flex; gap: 2px; }
.wb {
  width: 21px;
  height: 21px;
  border: 1px solid #e4edff;
  border-radius: 3px;
  justify-content: center;
  background: radial-gradient(circle at 25% 20%, #7da2f4, #3465de 55%, #1c49c6);
}
.wb.close { background: radial-gradient(circle at 25% 20%, #f0a088, #dc5233 55%, #b8341a); }
.wb svg { width: 21px; height: 21px; }

.menubar { height: 20px; display: flex; align-items: flex-start; }
.menubar > button, .open-item > button { height: 18px; padding: 0 5px; white-space: nowrap; }
.open-item { position: relative; z-index: 5; }
.open-item > .active { border: 1px solid #3a67b8; padding: 0 4px; color: #eef3ff; background: linear-gradient(90deg, #6b96de, #a9c0ec); }

.menu {
  position: absolute;
  top: 20px;
  left: -2px;
  width: 207px;
  padding: 1px 1px 3px;
  border: solid #fff;
  border-width: 0 1px 1px 2px;
  background: linear-gradient(90deg, #ded5db 0, #f1ebef 30px, #fff 90px);
}
.menu button { position: relative; width: 100%; height: 19px; padding: 0 15px 0 14px; border: 1px solid transparent; justify-content: space-between; white-space: nowrap; }
.menu kbd { font: inherit; color: #6c1518; }
.menu button:disabled { color: #aaa; }
.menu .hot, .menu .hot kbd { color: #eef4ff; }
.menu .hot { border-color: #3560ac; background: linear-gradient(90deg, #6a95dd, #b9cdf2); }
.menu hr { margin: 4px 0; border: 0; height: 1px; background: linear-gradient(90deg, #c4bdbd, #ddd 60%, #fff); }
.menu .sub::after { content: ""; position: absolute; right: 5px; top: 4px; border: solid transparent; border-width: 4px 0 4px 4px; border-left-color: #000; }
.tick { position: absolute; left: 1px; top: 4px; width: 9px; height: 9px; }

.toolbar { height: 28px; display: flex; align-items: center; border-top: 1px solid #aca899; box-shadow: inset 0 1px #fff; }
.toolbar.first { padding-left: 2px; }
.toolbar.second { padding-left: 1px; }
.toolbar button { flex: none; width: 26px; height: 26px; justify-content: center; }
.toolbar svg, .plugins svg, .grid svg { width: 20px; height: 20px; filter: drop-shadow(1px 1px 1px rgba(0, 0, 0, .3)); }
.sep { flex: none; width: 1px; height: 22px; margin: 0 4px 0 3px; background: #c5c2b2; }
.under-a { flex: none; width: 205px; }
.under-b { flex: none; width: 180px; }
.toolbar select {
  appearance: none;
  width: 76px;
  height: 21px;
  margin: 0 4px;
  padding: 0 4px;
  border: 1px solid #7f9db9;
  border-radius: 0;
  font: inherit;
  color: #000;
  background:
    linear-gradient(45deg, transparent 50%, #4d6185 50%) right 8px center / 4px 4px no-repeat,
    linear-gradient(315deg, transparent 50%, #4d6185 50%) right 4px center / 4px 4px no-repeat,
    linear-gradient(#c9d8fc, #b4c8f6) right 1px center / 14px 17px no-repeat,
    #fff;
}
.auto, .asm, .y2k { font: bold 7px "DejaVu Sans Condensed", sans-serif; text-anchor: middle; }
.auto { fill: #8b1717; }
.y2k { fill: #15264e; }
.asm { fill: #111; }
.glyph-t { font: bold 19px "Liberation Serif", serif; text-anchor: middle; fill: #3c3c3c; }
.fx-f { font: italic bold 18px "Liberation Serif", serif; }
.fx-x { font: bold 11px "DejaVu Sans Condensed", sans-serif; }

.work { flex: 1; display: flex; min-height: 0; border-top: 1px solid #8f8c7d; }
.plugins { width: 30px; padding-top: 2px; display: flex; flex-direction: column; }
.plugins button { height: 25px; padding-left: 4px; }

.canvas { position: relative; flex: 1; background: #808080; border: solid #77756a; border-width: 1px 0 0 1px; }
.texture { position: absolute; inset: 0; width: 100%; height: 100%; }

.window { position: absolute; display: flex; flex-direction: column; border-radius: 7px 7px 0 0; padding: 0 4px 4px; }
.w1 { left: 240px; top: 29px; width: 308px; height: 110px; }
.w2 { left: 243px; top: 70px; width: 305px; height: 110px; }
.w3 { left: 248px; top: 121px; width: 305px; height: 153px; }
.w1, .w2 { background: linear-gradient(#8fa9ee 0, #7792de 4px, #7c9ae4 14px, #86a6ee 24px, #7288d6 30px); }
.w3 { background: linear-gradient(#0a46c8 0, #1a74f5 3px, #0055e6 8px, #0062fa 20px, #0040c8 30px, #0035b0); }
.wtitle { height: 30px; display: flex; align-items: center; padding: 2px 2px 0 1px; }
.w3 h2 { text-shadow: 1px 1px 1px #003; }
.w1 h2, .w2 h2 { color: #dbe4fa; }
.w1 .close, .w2 .close { background: radial-gradient(circle at 25% 20%, #cf8a98, #b75f72 60%, #a85068); }
.w1 .wb, .w2 .wb { border-color: #b7c8f6; }
.wbody { flex: 1; padding: 8px 7px 8px 0; background: #a6a6a6; border: solid #fff; border-width: 0 2px 2px 0; box-shadow: inset 0 1px #666; }
.sheet { height: 100%; background: #fff; border: 1px solid #222; border-left: 0; box-shadow: 3px 3px 3px #333; overflow: hidden; }
.salve { width: 260px; height: 100px; margin-left: auto; }
.salve text { font: bold 56px "DejaVu Sans", sans-serif; fill: url(#ice); stroke: #43aebb; stroke-width: 2px; stroke-dasharray: 5 1; }

.step { position: absolute; left: 6px; bottom: 0; font: 900 60px/52px "Inter", "Lato", sans-serif; color: #ffcb00; -webkit-text-stroke: 2px #ffcb00; }

.tools { width: 69px; padding: 3px 5px 0; border-left: 2px solid #fff; }
.colors { position: relative; height: 50px; margin-bottom: 5px; }
.colors .fg, .colors .bg { position: absolute; width: 34px; height: 33px; box-shadow: 1px 1px 1px #aaa; }
.colors .fg { left: 0; top: 0; background: #ffcb99; }
.colors .bg { left: 23px; top: 17px; background: #fff; }
.swap { position: absolute; left: 39px; top: 1px; width: 14px; height: 14px; }
.reset { position: absolute; left: 4px; top: 36px; width: 12px; height: 12px; }
.palette { width: 57px; height: 36px; display: grid; grid-template-columns: repeat(8, 1fr); grid-template-rows: repeat(5, 1fr); gap: 1px; background: #d5d2c4; }
.pager { display: flex; gap: 3px; margin-top: 3px; }
.pager button { width: 27px; height: 13px; justify-content: center; background: linear-gradient(#d3dffc, #b9cbf6); }
.pager svg { width: 8px; height: 8px; }
.tools hr { margin: 6px 2px 6px 0; border: 0; height: 2px; background: #a9a697; border-bottom: 1px solid #fff; }
.tools .tight { margin: 4px 2px 6px 0; }
.grid { display: grid; grid-template-columns: 28px 28px; grid-auto-rows: 26px; }
.grid button { justify-content: center; }
.grid .on { width: 26px; height: 24px; align-self: center; justify-self: center; background: #fff; border: 1px solid #333; }
.shapes path, .shapes rect, .shapes circle { fill: none; stroke: #111; }
.shapes .flap { fill: #ffeeb8; stroke: #7a4b12; }
.shapes .folder { fill: #ffd77c; stroke: #7a4b12; }
.shapes .ink { stroke: #1a1f9c; stroke-width: 2px; }
```
